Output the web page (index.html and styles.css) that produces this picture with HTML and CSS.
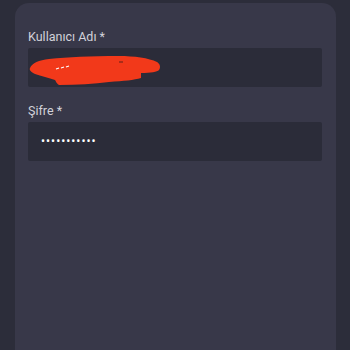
FILE: index.html
```html
<!DOCTYPE html>
<html lang="tr">
<head>
<meta charset="utf-8">
<link rel="stylesheet" href="styles.css">
</head>
<body>
<div class="card">
  <div class="field">
    <label class="label">Kullanıcı Adı *</label>
    <div class="input">
      <svg class="scribble" width="140" height="32" viewBox="0 0 140 32">
        <path d="M1 12 C3 7 10 4 20 3 C40 1 60 0 90 0 C105 0 120 2 128 6 C131 8 132 11 130 14 C128 16 122 17 112 17 L112 22 C105 24 95 25 80 26 C65 28 48 29 30 29 C27 27 27 25 26 24 C20 22 12 20 6 18 C2 16 0 14 1 12 Z" fill="#f2391a"/>
        <path d="M27 13 l3 -1 M32 12 l3 -1 M37 11 l3 -1" stroke="#ffffff" stroke-width="1.2"/>
        <path d="M90 6 l4 0" stroke="#7a2418" stroke-width="1.2"/>
      </svg>
    </div>
  </div>
  <div class="field">
    <label class="label">Şifre *</label>
    <div class="input">
      <span class="dots">•••••••••••</span>
    </div>
  </div>
</div>
</body>
</html>
```

FILE: styles.css
```css
html, body {
  margin: 0;
  padding: 0;
  height: 100%;
  background: #2c2d3a;
  overflow: hidden;
}
body {
  font-family: Roboto, "Liberation Sans", sans-serif;
}
.card {
  margin: 3px 14px 0 15px;
  height: 347px;
  background: #383849;
  border-radius: 14px 14px 0 0;
  padding: 26px 14px 0 13px;
  box-sizing: border-box;
  display: flex;
  flex-direction: column;
  gap: 16px;
}
.field {
  display: flex;
  flex-direction: column;
  gap: 3px;
}
.label {
  font-size: 12.5px;
  line-height: 16px;
  color: #d2d2da;
}
.input {
  position: relative;
  height: 39px;
  background: #2b2c39;
  border-radius: 2px;
  display: flex;
  align-items: center;
  padding-left: 13px;
}
.scribble {
  position: absolute;
  left: 1px;
  top: 8px;
}
.dots {
  color: #ffffff;
  font-size: 12px;
  letter-spacing: 1px;
  margin-top: -1px;
}
```
